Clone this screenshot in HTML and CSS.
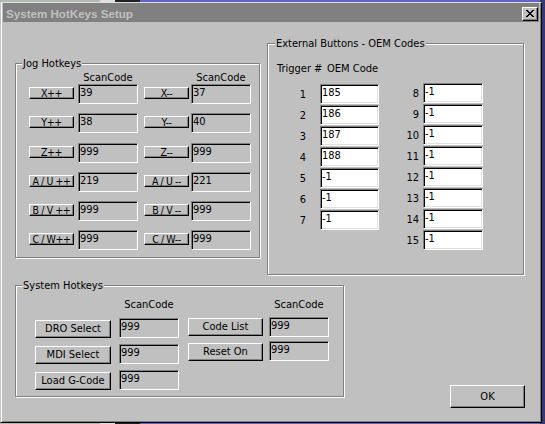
FILE: index.html
```html
<!DOCTYPE html>
<html>
<head>
<meta charset="utf-8">
<title>System HotKeys Setup</title>
<link rel="stylesheet" href="styles.css">
</head>
<body>
<div class="window">
  <div class="titlebar">
    <span class="title">System HotKeys Setup</span>
    <span class="close"><svg width="8" height="7" viewBox="0 0 8 7" shape-rendering="crispEdges"><path d="M0 0h2v1h-2z M6 0h2v1h-2z M1 1h2v1h-2z M5 1h2v1h-2z M2 2h4v1h-4z M3 3h2v1h-2z M2 4h4v1h-4z M1 5h2v1h-2z M5 5h2v1h-2z M0 6h2v1h-2z M6 6h2v1h-2z" fill="#000"/></svg></span>
  </div>
  <div class="client">
    <div class="top-row">
      <fieldset class="group jog">
        <legend>Jog Hotkeys</legend>
        <div class="jog-head"><span class="hd hd1">ScanCode</span><span class="hd hd2">ScanCode</span></div>
        <div class="jrow"><span class="jbtn">X++</span><span class="fld gray">39</span><span class="jbtn b2">X--</span><span class="fld gray f2">37</span></div>
        <div class="jrow"><span class="jbtn">Y++</span><span class="fld gray">38</span><span class="jbtn b2">Y--</span><span class="fld gray f2">40</span></div>
        <div class="jrow"><span class="jbtn">Z++</span><span class="fld gray">999</span><span class="jbtn b2">Z--</span><span class="fld gray f2">999</span></div>
        <div class="jrow"><span class="jbtn">A / U ++</span><span class="fld gray">219</span><span class="jbtn b2">A / U --</span><span class="fld gray f2">221</span></div>
        <div class="jrow"><span class="jbtn">B / V ++</span><span class="fld gray">999</span><span class="jbtn b2">B / V --</span><span class="fld gray f2">999</span></div>
        <div class="jrow"><span class="jbtn">C / W++</span><span class="fld gray">999</span><span class="jbtn b2">C / W--</span><span class="fld gray f2">999</span></div>
      </fieldset>
      <fieldset class="group ext">
        <legend>External Buttons - OEM Codes</legend>
        <div class="ext-head"><span class="h-trig">Trigger</span><span class="h-hash">#</span><span class="h-oem">OEM Code</span></div>
        <div class="ext-cols">
          <div class="ecol c1">
            <div class="erow"><span class="num">1</span><span class="fld white">185</span></div>
            <div class="erow"><span class="num">2</span><span class="fld white">186</span></div>
            <div class="erow"><span class="num">3</span><span class="fld white">187</span></div>
            <div class="erow"><span class="num">4</span><span class="fld white">188</span></div>
            <div class="erow"><span class="num">5</span><span class="fld white">-1</span></div>
            <div class="erow"><span class="num">6</span><span class="fld white">-1</span></div>
            <div class="erow"><span class="num">7</span><span class="fld white">-1</span></div>
          </div>
          <div class="ecol c2">
            <div class="erow"><span class="num">8</span><span class="fld white">-1</span></div>
            <div class="erow"><span class="num">9</span><span class="fld white">-1</span></div>
            <div class="erow"><span class="num">10</span><span class="fld white">-1</span></div>
            <div class="erow"><span class="num">11</span><span class="fld white">-1</span></div>
            <div class="erow"><span class="num">12</span><span class="fld white">-1</span></div>
            <div class="erow"><span class="num">13</span><span class="fld white">-1</span></div>
            <div class="erow"><span class="num">14</span><span class="fld white">-1</span></div>
            <div class="erow"><span class="num">15</span><span class="fld white">-1</span></div>
          </div>
        </div>
      </fieldset>
    </div>
    <div class="bottom-row">
      <fieldset class="group sys">
        <legend>System Hotkeys</legend>
        <div class="sys-cols">
          <div class="scol s1">
            <div class="shd">ScanCode</div>
            <div class="srow first"><span class="btn sbtn">DRO Select</span><span class="fld gray">999</span></div>
            <div class="srow"><span class="btn sbtn">MDI Select</span><span class="fld gray">999</span></div>
            <div class="srow"><span class="btn sbtn">Load G-Code</span><span class="fld gray">999</span></div>
          </div>
          <div class="scol s2">
            <div class="shd">ScanCode</div>
            <div class="srow first"><span class="btn sbtn">Code List</span><span class="fld gray">999</span></div>
            <div class="srow"><span class="btn sbtn">Reset On</span><span class="fld gray">999</span></div>
          </div>
        </div>
      </fieldset>
      <span class="btn ok">OK</span>
    </div>
  </div>
</div>
</body>
</html>
```
FILE: styles.css
```css
html, body {
  margin: 0;
  padding: 0;
}
body {
  width: 545px;
  height: 424px;
  overflow: hidden;
  background: linear-gradient(to right, #b0bcb0 0 100px, #e0e0e0 100px 115px, #202020 115px 140px, #6464c8 140px 540px, #383870 540px);
  font-family: "DejaVu Sans Condensed", "Liberation Sans", sans-serif;
  font-size: 11px;
  color: #000;
}
.window {
  margin-top: 2px;
  width: 542px;
  height: 421px;
  box-sizing: border-box;
  background: #c0c0c0;
  border: 1px solid;
  border-color: #dfdfdf #000 #000 #c0c0c0;
  box-shadow: inset 1px 0 #fff, inset -1px -1px #808080;
  padding: 0 2px 2px 2px;
  display: flex;
  flex-direction: column;
}
.titlebar {
  height: 19px;
  box-sizing: border-box;
  background: #808080;
  display: flex;
  justify-content: space-between;
  align-items: flex-start;
  padding: 3px 0 0 3px;
}
.title {
  font-family: "Liberation Sans", Arial, sans-serif;
  font-weight: bold;
  font-size: 11.6px;
  line-height: 16px;
  color: #c0c0c0;
  white-space: nowrap;
}
.close {
  width: 16px;
  height: 14px;
  box-sizing: border-box;
  margin-top: 1px;
  margin-right: 1px;
  background: #c0c0c0;
  border: 1px solid;
  border-color: #fff #000 #000 #fff;
  box-shadow: inset -1px -1px #808080;
  padding: 2px 0 0 3px;
  display: flex;
}
.close svg { display: block; }
.client {
  flex: 1;
  padding: 15px 0 0 12px;
}
.top-row {
  display: flex;
  align-items: flex-start;
}
.bottom-row {
  display: flex;
  align-items: flex-start;
  margin-top: 4px;
}
.group {
  margin: 0;
  min-width: 0;
  box-sizing: border-box;
  border: 1px solid #808080;
  box-shadow: inset 1px 1px #fff, 1px 1px #fff;
}
.group legend {
  padding: 0 1px;
  line-height: 13px;
  background: #c0c0c0;
  white-space: nowrap;
}
/* field */
.fld {
  display: block;
  box-sizing: border-box;
  height: 20px;
  width: 60px;
  border: 1px solid;
  border-color: #808080 #fff #fff #808080;
  padding: 0 0 0 1px;
  line-height: 16px;
  white-space: nowrap;
  overflow: hidden;
}
.fld.gray {
  background: #c0c0c0;
  box-shadow: inset 1px 1px #000;
}
.fld.white {
  background: #fff;
  box-shadow: inset 1px 1px #000, inset -1px -1px #dfdfdf;
}
/* Jog */
.jog {
  width: 245px;
  height: 201px;
  margin-top: 20px;
  padding: 1px 0 0 13px;
}
.jog legend { margin-left: -7px; }
.jog-head {
  display: flex;
  height: 13px;
  line-height: 13px;
}
.hd {
  width: 60px;
  text-align: center;
  white-space: nowrap;
}
.hd1 { margin-left: 49px; }
.hd2 { margin-left: 53px; }
.jrow {
  display: flex;
  align-items: flex-start;
  height: 20px;
  margin-top: 9px;
}
.jog-head + .jrow { margin-top: 0; }
.jrow:nth-child(5) { margin-top: 10px; }
.jbtn {
  display: block;
  box-sizing: border-box;
  width: 45px;
  height: 12px;
  margin-top: 3px;
  border: 1px solid;
  border-color: #fff #000 #000 #fff;
  box-shadow: inset -1px -1px #808080;
  line-height: 10px;
  font-size: 10.5px;
  letter-spacing: -0.4px;
  text-align: center;
  white-space: pre;
  overflow: hidden;
}
.jrow .fld { margin-left: 4px; }
.jrow .b2 { margin-left: 6px; }
.jrow .f2 { margin-left: 2px; }
/* External */
.ext {
  width: 257px;
  height: 238px;
  margin-left: 7px;
  padding: 12px 0 0 9px;
}
.ext legend { margin-left: -2px; }
.ext-head {
  display: flex;
  height: 13px;
  line-height: 13px;
  white-space: nowrap;
}
.h-trig { width: 37px; }
.h-hash { width: 13px; }
.ext-cols {
  display: flex;
  align-items: flex-start;
  margin-top: 9px;
}
.ecol { display: flex; flex-direction: column; }
.ecol.c2 { margin-left: 11px; margin-top: -1px; }
.erow {
  display: flex;
  height: 20px;
  margin-bottom: 1px;
}
.num {
  width: 29px;
  text-align: right;
  line-height: 20px;
  padding-top: 1px;
}
.c1 .fld { margin-left: 14px; width: 59px; }
.c2 .fld { margin-left: 4px; width: 60px; }
/* System */
.sys {
  width: 329px;
  height: 118px;
  padding: 6px 0 0 19px;
}
.sys legend { margin-left: -13px; }
.sys-cols {
  display: flex;
  align-items: flex-start;
}
.scol { display: flex; flex-direction: column; }
.scol.s2 { margin-left: 9px; }
.shd {
  height: 13px;
  line-height: 13px;
  width: 60px;
  text-align: center;
  white-space: nowrap;
}
.s1 .shd { margin-left: 84px; }
.s2 .shd { margin-left: 81px; }
.srow {
  display: flex;
  align-items: flex-start;
  height: 20px;
}
.s1 .srow { margin-top: 6px; }
.s1 .srow.first { margin-top: 7px; }
.s2 .srow { margin-top: 4px; }
.s2 .srow.first { margin-top: 6px; }
.btn {
  display: block;
  box-sizing: border-box;
  background: #c0c0c0;
  border: 1px solid;
  border-color: #fff #000 #000 #fff;
  box-shadow: inset -1px -1px #808080;
  text-align: center;
  white-space: nowrap;
}
.sbtn {
  height: 18px;
  line-height: 16px;
}
.s1 .sbtn { width: 76px; margin-top: 2px; }
.s1 .fld { margin-left: 8px; }
.s2 .sbtn { width: 75px; margin-top: 1px; }
.s2 .srow + .srow .sbtn { margin-top: 2px; }
.s2 .fld { margin-left: 6px; }
.ok {
  width: 75px;
  height: 23px;
  line-height: 21px;
  margin-left: 106px;
  margin-top: 106px;
}
```
